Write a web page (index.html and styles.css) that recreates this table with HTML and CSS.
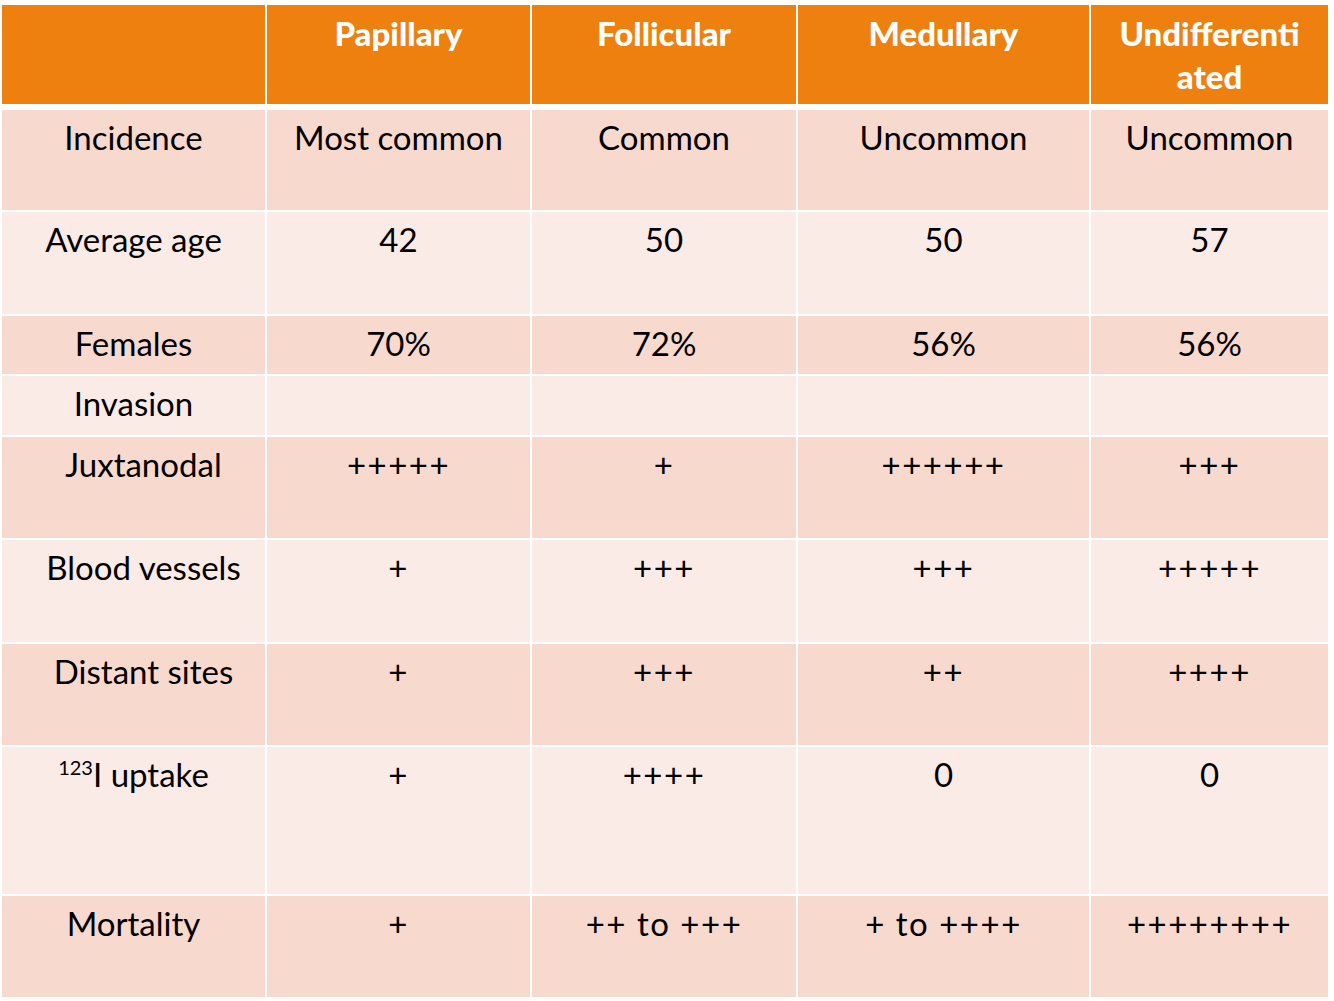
FILE: index.html
```html
<!DOCTYPE html>
<html lang="en">
<head>
<meta charset="utf-8">
<title>Thyroid carcinoma comparison</title>
<link rel="stylesheet" href="styles.css">
</head>
<body>
<div class="table">
  <div class="thead">
    <div class="th"></div>
    <div class="th">Papillary</div>
    <div class="th">Follicular</div>
    <div class="th">Medullary</div>
    <div class="th">Undifferenti<wbr>ated</div>
  </div>
  <div class="tbody">
    <div class="row dark h100">
      <div class="td">Incidence</div>
      <div class="td">Most common</div>
      <div class="td">Common</div>
      <div class="td">Uncommon</div>
      <div class="td">Uncommon</div>
    </div>
    <div class="row light h102">
      <div class="td">Average age</div>
      <div class="td">42</div>
      <div class="td">50</div>
      <div class="td">50</div>
      <div class="td">57</div>
    </div>
    <div class="row dark h58">
      <div class="td">Females</div>
      <div class="td">70%</div>
      <div class="td">72%</div>
      <div class="td">56%</div>
      <div class="td">56%</div>
    </div>
    <div class="row light h59">
      <div class="td">Invasion</div>
      <div class="td"></div>
      <div class="td"></div>
      <div class="td"></div>
      <div class="td"></div>
    </div>
    <div class="row dark h101">
      <div class="td sub">Juxtanodal</div>
      <div class="td plus">+++++</div>
      <div class="td plus">+</div>
      <div class="td plus">++++++</div>
      <div class="td plus">+++</div>
    </div>
    <div class="row light h102">
      <div class="td sub">Blood vessels</div>
      <div class="td plus">+</div>
      <div class="td plus">+++</div>
      <div class="td plus">+++</div>
      <div class="td plus">+++++</div>
    </div>
    <div class="row dark h101">
      <div class="td sub">Distant sites</div>
      <div class="td plus">+</div>
      <div class="td plus">+++</div>
      <div class="td plus">++</div>
      <div class="td plus">++++</div>
    </div>
    <div class="row light h147">
      <div class="td"><sup class="iso">123</sup>I uptake</div>
      <div class="td plus">+</div>
      <div class="td plus">++++</div>
      <div class="td">0</div>
      <div class="td">0</div>
    </div>
    <div class="row dark h101">
      <div class="td">Mortality</div>
      <div class="td plus">+</div>
      <div class="td plus">++ to +++</div>
      <div class="td plus">+ to ++++</div>
      <div class="td plus">++++++++</div>
    </div>
  </div>
</div>
</body>
</html>
```

FILE: styles.css
```css
html, body {
  margin: 0;
  padding: 0;
  background: #ffffff;
}

body {
  padding: 5px 0 0 2px;
  font-family: "Lato", "Open Sans", sans-serif;
  color: #000000;
}

.table {
  display: flex;
  flex-direction: column;
  gap: 6px;
  width: 1326px;
}

.thead,
.row {
  display: grid;
  grid-template-columns: 263px 263px 264px 291px 237px;
  column-gap: 2px;
}

.tbody {
  display: flex;
  flex-direction: column;
  gap: 2px;
}

.thead {
  height: 99px;
}

.th {
  background: #ee800f;
  color: #ffffff;
  font-weight: 900;
  font-size: 33px;
  line-height: 43px;
  text-align: center;
  padding: 7px 4px 0;
}

.row.h100 { height: 100px; }
.row.h101 { height: 101px; }
.row.h102 { height: 102px; }
.row.h58 { height: 58px; }
.row.h59 { height: 59px; }
.row.h147 { height: 147px; }

.dark .td { background: #f8d9cd; }
.light .td { background: #fbebe7; }

.td {
  font-size: 33px;
  line-height: 43px;
  text-align: center;
  padding-top: 6px;
}

.td.plus {
  letter-spacing: 1.5px;
}

.td.sub {
  padding-left: 20px;
}

.iso {
  font-size: 20px;
  line-height: 0;
  vertical-align: 12px;
}
```
